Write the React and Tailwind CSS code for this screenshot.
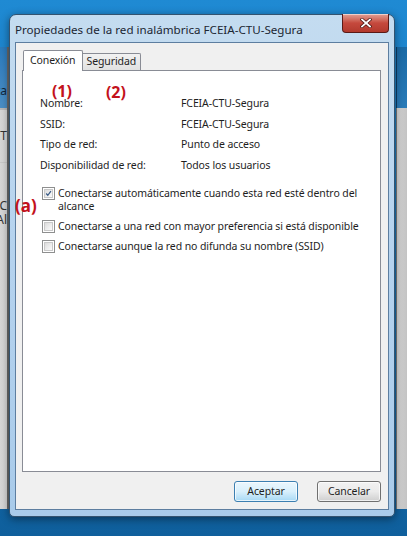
import React from 'react';

const FONT = { fontFamily: '"Noto Sans", "Open Sans", Arial, sans-serif' };

// Win7 style checkbox
const Checkbox = ({ checked }) => (
    <div className="w-[13px] h-[13px] shrink-0 border border-[#8e8f8f] bg-white p-[1px]">
        <div className="w-full h-full border border-[#c8c8c8] bg-gradient-to-br from-[#dcdcdc] to-[#fbfbfb] relative">
            {checked && (
                <svg viewBox="0 0 9 9" className="absolute inset-0 w-full h-full">
                    <path d="M1.5 4.5 L3.6 6.8 L7.6 1.6" fill="none" stroke="#3a5b86" strokeWidth="1.6" />
                </svg>
            )}
        </div>
    </div>
);

const InfoRow = ({ label, value }) => (
    <div className="flex h-[20.7px] items-center">
        <span className="w-[141px]">{label}</span>
        <span>{value}</span>
    </div>
);

const CheckRow = ({ checked, children }) => (
    <div className="flex items-start gap-[3px]">
        <Checkbox checked={checked} />
        <span className="leading-[12.5px]">{children}</span>
    </div>
);

const Annotation = ({ className, children }) => (
    <span className={`absolute font-bold text-[#c3121c] text-[16px] leading-none ${className}`}>{children}</span>
);

export default function App() {
    return (
        <div
            className="relative w-[407px] h-[536px] overflow-hidden bg-gradient-to-b from-[#1f8ad3] via-[#1673b6] to-[#0f5f9c]"
            style={FONT}
        >
            {/* window behind, left */}
            <div className="absolute left-[-291px] top-[47px] w-[300px] h-[462px] flex flex-col border-r-2 border-[#6b6b6b]">
                <div className="h-[61px] bg-gradient-to-b from-[#2b7bbd] to-[#4b8fc6] flex items-end justify-end pb-[8px] text-[12px] text-[#10263c]">
                    Conecta
                </div>
                <div className="flex-1 bg-gradient-to-r from-[#ececec] to-[#d6d6d6] flex flex-col text-[12px] text-[#333]">
                    <div className="h-[2px] bg-[#b9b9b9]" />
                    <div className="h-[52px] flex items-center justify-end">FCEIA-CT</div>
                    <div className="h-[1px] bg-[#c9c9c9]" />
                    <div className="flex flex-col items-end pt-[36px] leading-[14px]">
                        <span>C</span>
                        <span>Al</span>
                    </div>
                </div>
            </div>

            {/* window behind, right */}
            <div className="absolute left-[396px] top-[47px] w-[20px] h-[462px] flex flex-col">
                <div className="h-[61px] bg-gradient-to-b from-[#1a6aa6] to-[#2a7bb8] border-l border-[#0d3d66]" />
                <div className="flex-1 bg-gradient-to-r from-[#d6d6d6] via-[#c4c4c4] to-[#8d8d8d] border-l border-[#7a7a7a]" />
            </div>

            {/* dialog */}
            <div className="absolute left-[9px] top-[14px] w-[386px] h-[503px] rounded-t-[7px] rounded-b-[5px] border border-[#34536f] bg-gradient-to-b from-[#c4dcf0] via-[#b4d2ee] to-[#a9cbea] flex flex-col px-[5px] pb-[6px] shadow-[0_2px_8px_rgba(0,0,0,0.45)]">
                {/* title bar */}
                <div className="h-[27px] flex items-start justify-between">
                    <span className="pt-[7px] text-[11.6px] leading-[16px] text-[#1c2733]">
                        Propiedades de la red inalámbrica FCEIA-CTU-Segura
                    </span>
                    <div className="w-[47px] h-[19px] -mt-[1px] rounded-b-[4px] border border-t-0 border-[#5a1a17] bg-gradient-to-b from-[#e0a096] via-[#c5493d] to-[#b23a2e] flex items-center justify-center shadow-[inset_0_1px_0_rgba(255,255,255,0.5)]">
                        <svg viewBox="0 0 12 10" className="w-[12px] h-[10px]">
                            <path d="M2 1.5 L10 8.5 M10 1.5 L2 8.5" stroke="#4a1410" strokeWidth="3.2" strokeLinecap="square" />
                            <path d="M2 1.5 L10 8.5 M10 1.5 L2 8.5" stroke="#ffffff" strokeWidth="1.8" strokeLinecap="square" />
                        </svg>
                    </div>
                </div>

                {/* client area */}
                <div className="flex-1 border border-[#5d7ea0] bg-[#f0f0f0] flex flex-col pl-[6px] pr-[7px] pt-[7px] text-[10.5px] tracking-[-0.1px] text-[#1e1e1e]">
                    {/* tabs */}
                    <div className="flex items-end h-[20px] pl-[1px] relative z-10">
                        <div className="h-[21px] -mb-[1px] px-[6px] border border-b-0 border-[#898c95] bg-white rounded-t-[2px] flex items-center">
                            Conexión
                        </div>
                        <div className="h-[17px] px-[4px] border border-l-0 border-b-0 border-[#898c95] bg-gradient-to-b from-[#f2f2f2] to-[#e1e1e1] rounded-tr-[2px] flex items-center">
                            Seguridad
                        </div>
                    </div>

                    {/* tab panel */}
                    <div className="relative h-[402px] border border-[#898c95] bg-white pl-[17px] pt-[22.5px]">
                        <div className="flex flex-col">
                            <InfoRow label="Nombre:" value="FCEIA-CTU-Segura" />
                            <InfoRow label="SSID:" value="FCEIA-CTU-Segura" />
                            <InfoRow label="Tipo de red:" value="Punto de acceso" />
                            <InfoRow label="Disponibilidad de red:" value="Todos los usuarios" />
                        </div>

                        <div className="flex flex-col gap-[7.5px] pt-[11px] pl-[2px]">
                            <CheckRow checked>
                                Conectarse automáticamente cuando esta red esté dentro del
                                <br />
                                alcance
                            </CheckRow>
                            <CheckRow>Conectarse a una red con mayor preferencia si está disponible</CheckRow>
                            <CheckRow>Conectarse aunque la red no difunda su nombre (SSID)</CheckRow>
                        </div>

                        <Annotation className="left-[29px] top-[12px]">(1)</Annotation>
                        <Annotation className="left-[83px] top-[13px]">(2)</Annotation>
                    </div>

                    {/* buttons */}
                    <div className="flex justify-end gap-[19px] pt-[9px]">
                        <button className="w-[64px] h-[21px] rounded-[3px] border border-[#3c7fb1] bg-gradient-to-b from-[#eaf6fd] via-[#d9f0fc] to-[#a7d9f5] text-[#1e1e1e] shadow-[inset_0_0_0_1px_rgba(255,255,255,0.7)]">
                            Aceptar
                        </button>
                        <button className="w-[64px] h-[21px] rounded-[3px] border border-[#707070] bg-gradient-to-b from-[#f2f2f2] via-[#ebebeb] to-[#cfcfcf] text-[#1e1e1e] shadow-[inset_0_0_0_1px_rgba(255,255,255,0.7)]">
                            Cancelar
                        </button>
                    </div>
                </div>
            </div>

            {/* annotation outside the panel */}
            <Annotation className="left-[15px] top-[197px] text-[17px]">(a)</Annotation>
        </div>
    );
}
